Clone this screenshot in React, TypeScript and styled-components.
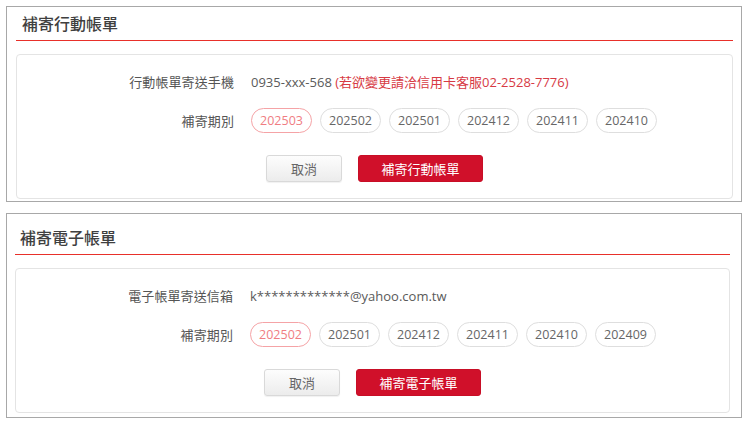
import React from "react";
import styled, { createGlobalStyle } from "styled-components";

const GlobalStyle = createGlobalStyle`
  html, body {
    margin: 0;
    padding: 0;
    background: #ffffff;
  }
  body {
    font-family: "Open Sans", "Noto Sans CJK TC", sans-serif;
    color: #555;
  }
  * { box-sizing: border-box; }
`;

const Page = styled.div`
  padding: 6px 0 0 6px;
  width: 742px;
`;

const Panel = styled.section<{ $top: number; $bottom: number; $left: number; $right: number }>`
  border: 1px solid #a8a8a8;
  padding: 0 ${(p) => p.$right}px ${(p) => p.$bottom}px ${(p) => p.$left}px;
  margin-bottom: 11px;
  & > header {
    padding-top: ${(p) => p.$top}px;
  }
`;

const Header = styled.header<{ $indent: number }>`
  padding-left: ${(p) => p.$indent}px;
  padding-bottom: 7px;
  border-bottom: 1.5px solid #e8302a;
`;

const Title = styled.h2`
  margin: 0;
  font-size: 16px;
  line-height: 20px;
  font-weight: 500;
  color: #3f3f3f;
  font-family: "Noto Sans CJK TC", sans-serif;
`;

const Card = styled.div`
  margin-top: 13px;
  border: 1px solid #e4e4e4;
  border-radius: 4px;
  padding: 14px 0 16px;
`;

const Row = styled.div`
  display: flex;
  align-items: center;
  height: 25px;
  margin-bottom: 14px;
`;

const Label = styled.div`
  width: 234px;
  padding-right: 17px;
  text-align: right;
  font-size: 13px;
  color: #555;
  font-family: "Noto Sans CJK TC", sans-serif;
  letter-spacing: 0.1px;
`;

const Value = styled.div`
  font-size: 13px;
  color: #5a5a5a;
  white-space: nowrap;
`;

const Note = styled.span`
  color: #d73a44;
`;

const Pills = styled.div`
  display: flex;
  gap: 8px;
`;

const Pill = styled.button<{ $active?: boolean }>`
  height: 25px;
  width: 61px;
  padding: 0;
  border-radius: 13px;
  border: 1px solid ${(p) => (p.$active ? "#f5a3a6" : "#dedede")};
  background: #fff;
  color: ${(p) => (p.$active ? "#f07d82" : "#666")};
  font-family: "Open Sans", sans-serif;
  font-size: 12.5px;
  line-height: 23px;
  cursor: pointer;
`;

const Actions = styled.div`
  display: flex;
  justify-content: center;
  gap: 16px;
  margin-top: 22px;
`;

const Button = styled.button<{ $primary?: boolean }>`
  height: 27px;
  width: ${(p) => (p.$primary ? 125 : 76)}px;
  border-radius: 3px;
  font-size: 13px;
  font-family: "Noto Sans CJK TC", sans-serif;
  cursor: pointer;
  padding: 0;
  border: 1px solid ${(p) => (p.$primary ? "#c80e26" : "#d9d9d9")};
  background: ${(p) =>
    p.$primary ? "#d0102a" : "linear-gradient(#fdfdfd, #ececec)"};
  color: ${(p) => (p.$primary ? "#ffffff" : "#666")};
  box-shadow: ${(p) => (p.$primary ? "none" : "0 1px 1px rgba(0,0,0,0.06)")};
`;

type Section = {
  title: string;
  label: string;
  value: React.ReactNode;
  periods: string[];
  submit: string;
  top: number;
  bottom: number;
  left: number;
  right: number;
  indent: number;
};

const sections: Section[] = [
  {
    title: "補寄行動帳單",
    label: "行動帳單寄送手機",
    value: (
      <>
        0935-xxx-568 <Note>(若欲變更請洽信用卡客服02-2528-7776)</Note>
      </>
    ),
    periods: ["202503", "202502", "202501", "202412", "202411", "202410"],
    submit: "補寄行動帳單",
    top: 6,
    bottom: 2,
    left: 9,
    right: 8,
    indent: 6,
  },
  {
    title: "補寄電子帳單",
    label: "電子帳單寄送信箱",
    value: "k*************@yahoo.com.tw",
    periods: ["202502", "202501", "202412", "202411", "202410", "202409"],
    submit: "補寄電子帳單",
    top: 13,
    bottom: 4,
    left: 8,
    right: 11,
    indent: 5,
  },
];

export default function App() {
  return (
    <>
      <GlobalStyle />
      <Page>
        {sections.map((s) => (
          <Panel key={s.title} $top={s.top} $bottom={s.bottom} $left={s.left} $right={s.right}>
            <Header $indent={s.indent}>
              <Title>{s.title}</Title>
            </Header>
            <Card>
              <Row>
                <Label>{s.label}</Label>
                <Value>{s.value}</Value>
              </Row>
              <Row>
                <Label>補寄期別</Label>
                <Pills>
                  {s.periods.map((p, i) => (
                    <Pill key={p} $active={i === 0}>
                      {p}
                    </Pill>
                  ))}
                </Pills>
              </Row>
              <Actions>
                <Button>取消</Button>
                <Button $primary>{s.submit}</Button>
              </Actions>
            </Card>
          </Panel>
        ))}
      </Page>
    </>
  );
}
